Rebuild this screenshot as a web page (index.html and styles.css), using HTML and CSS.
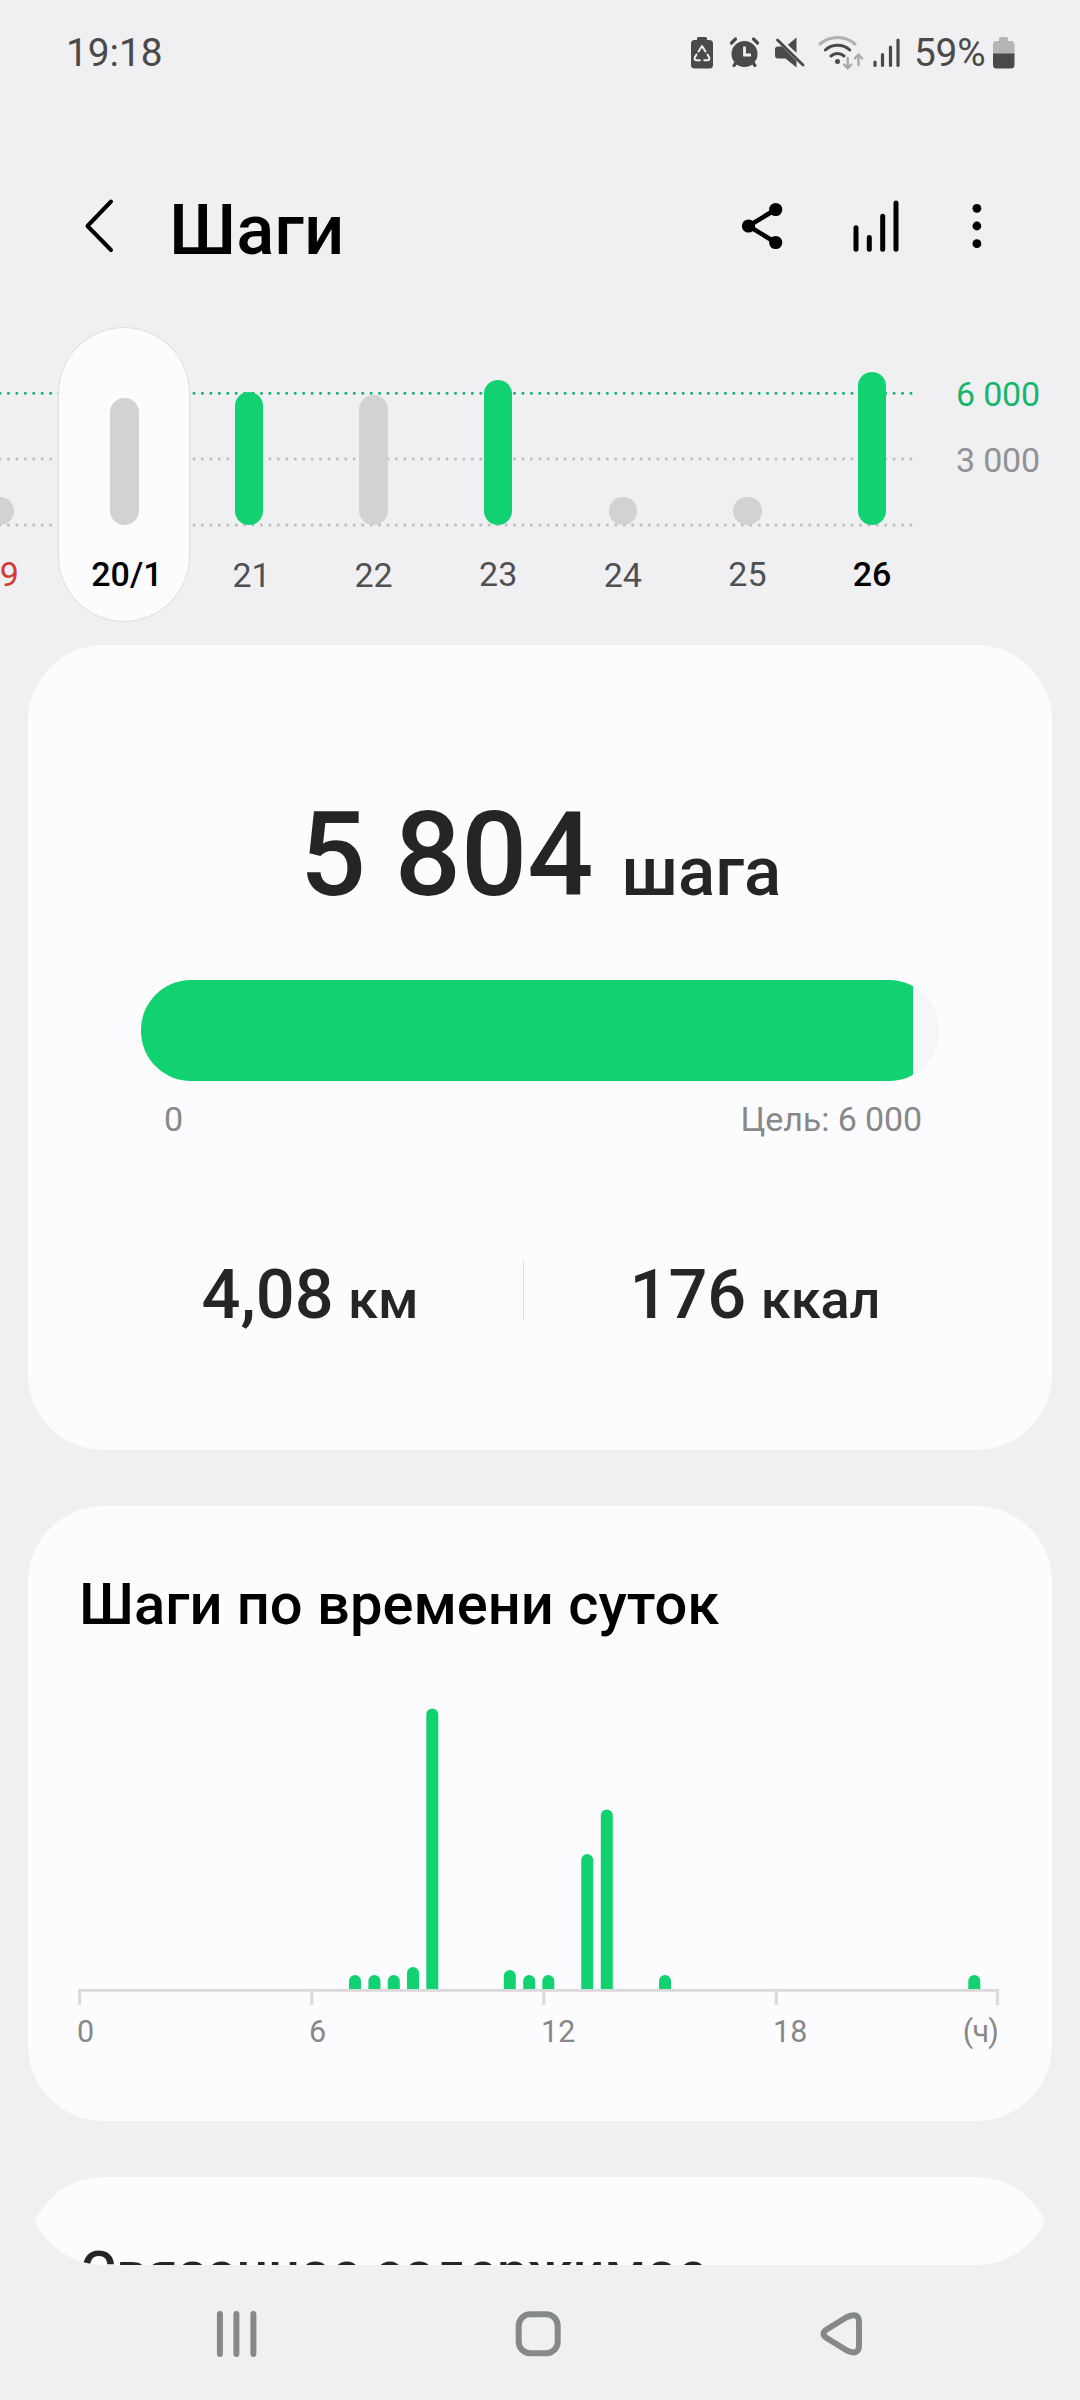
FILE: index.html
```html
<!DOCTYPE html>
<html lang="ru">
<head>
<meta charset="utf-8">
<title>Шаги</title>
<link rel="stylesheet" href="styles.css">
</head>
<body>
<header class="status">
  <span class="time">19:18</span>
  <div class="status-right">
    <svg class="status-icons" width="246" height="50" viewBox="0 0 246 50">
      <g fill="#4a4a4a">
        <path d="M8 4.500a1.500 1.500 0 0 1 1.500-1.500h7a1.500 1.500 0 0 1 1.500 1.500V6h2.500a3.500 3.500 0 0 1 3.500 3.500v21.500a3.500 3.500 0 0 1-3.500 3.500h-15A3.500 3.500 0 0 1 2 31V9.500a3.500 3.500 0 0 1 3.500-3.500h2.500z"/>
        <circle cx="55.500" cy="20" r="13"/>
        <path d="M86 15.500a3 3 0 0 1 3-3h4l14.500 14.500V33.500l-11-9h-7.500a3 3 0 0 1-3-3zM98.500 11l9-7.500V19z"/>
        <circle cx="148.500" cy="27.500" r="2.500"/>
      </g>
      <g fill="none" stroke="#f0f0f3" stroke-width="2" stroke-linecap="round" stroke-linejoin="round">
        <path d="M9.500 17.500l3.500-5.500 3.500 5.500M7.500 20.500l-1.700 3q-.8 2.800 2 2.800h3M18.500 20.500l1.700 3q.8 2.800-2 2.800h-3"/>
      </g>
      <path d="M55.500 12.500v8.500h6.500" fill="none" stroke="#f0f0f3" stroke-width="2.800"/>
      <g fill="none" stroke="#4a4a4a" stroke-width="3.200" stroke-linecap="round">
        <path d="M42.500 9l4-4M64.500 5l4 4M45 31.500l3-4M66 31.500l-3-4"/>
      </g>
      <path d="M91 5l24.500 24.500" stroke="#f0f0f3" stroke-width="3"/>
      <path d="M88.500 6L114 31" stroke="#4a4a4a" stroke-width="2.800" stroke-linecap="round"/>
      <g fill="none" stroke-width="3" stroke-linecap="round">
        <path d="M131 10a27 27 0 0 1 35 0" stroke="#b0b0b2"/>
        <path d="M136.300 16a18.500 18.500 0 0 1 24.500 0M142 22a10 10 0 0 1 13 0" stroke="#4a4a4a"/>
        <path d="M158.700 24v10M155 30.500l3.700 3.700 3.700-3.700M169.500 31V21M165.800 24.500l3.700-3.700 3.700 3.700" stroke="#a9a9ab" stroke-width="2.400"/>
        <path d="M186 28v3.500M193.500 20.500v11M201.500 13v18.500M209 6v25.500" stroke="#4a4a4a" stroke-width="3.200"/>
      </g>
    </svg>
    <span class="percent">59%</span>
    <svg class="battery" width="22" height="32" viewBox="0 0 22 32">
      <path d="M6 2a2 2 0 0 1 2-2h5a2 2 0 0 1 2 2v2h3a3.500 3.500 0 0 1 3.500 3.500V17H0V7.500A3.500 3.500 0 0 1 3.500 4H6z" fill="#b5b5b8"/>
      <path d="M0 16.500h21.500V28a3.500 3.500 0 0 1-3.500 3.500H3.500A3.500 3.500 0 0 1 0 28z" fill="#4a4a4a"/>
    </svg>
  </div>
</header>

<nav class="appbar">
  <svg class="back" width="32" height="60" viewBox="0 0 32 60"><path d="M27 5.500L3.500 30 27 54" fill="none" stroke="#000" stroke-width="4" stroke-linecap="round" stroke-linejoin="round"/></svg>
  <h1>Шаги</h1>
  <svg class="actions" width="260" height="60" viewBox="0 0 260 60">
    <path d="M35.700 13.500L8.500 30l27.200 16.500" fill="none" stroke="#000" stroke-width="4.600"/>
    <circle cx="35.700" cy="13.500" r="6.600"/><circle cx="8.500" cy="30" r="6.600"/><circle cx="35.700" cy="46.500" r="6.600"/>
    <path d="M116 31.700v21.500M129.300 41.500v11.700M142.700 20.300v32.900M156 7v46.200" stroke="#000" stroke-width="5" stroke-linecap="round"/>
    <circle cx="236.900" cy="12.300" r="4.400"/><circle cx="236.900" cy="30" r="4.400"/><circle cx="236.900" cy="47.700" r="4.400"/>
  </svg>
</nav>

<section class="week">
  <svg class="grid-lines" width="920" height="300" viewBox="0 0 920 300">
    <g fill="none" stroke-width="3" stroke-linecap="round" stroke-dasharray="0 8.435">
      <path d="M0 68.300H912" stroke="#12b46c"/>
      <path d="M0 134H912M0 200H912" stroke="#bdbdc0"/>
    </g>
  </svg>
  <div class="days">
    <div class="day sunday"><i class="bar" style="height:28px"></i><span>19</span></div>
    <div class="day selected"><i class="bar" style="height:127px"></i><span>20/1</span></div>
    <div class="day next"><i class="bar reached" style="height:133px"></i><span class="low">21</span></div>
    <div class="day"><i class="bar" style="height:130px"></i><span class="low">22</span></div>
    <div class="day"><i class="bar reached" style="height:145px"></i><span>23</span></div>
    <div class="day"><i class="bar" style="height:28px"></i><span class="low">24</span></div>
    <div class="day"><i class="bar" style="height:28px"></i><span>25</span></div>
    <div class="day today"><i class="bar reached" style="height:153px"></i><span>26</span></div>
  </div>
  <div class="scale"><span class="goal">6 000</span><span>3 000</span></div>
</section>

<main class="content">
  <section class="card summary">
    <p class="total"><b>5 804</b><span>шага</span></p>
    <div class="track"><div class="fill" style="width:96.73%"></div></div>
    <div class="limits"><span>0</span><span>Цель: 6 000</span></div>
    <div class="stats">
      <p class="stat"><b>4,08</b><span>км</span></p>
      <i class="divider"></i>
      <p class="stat energy"><b>176</b><span>ккал</span></p>
    </div>
  </section>

  <section class="card hourly">
    <h2>Шаги по времени суток</h2>
    <svg class="chart" width="930" height="310" viewBox="0 0 930 310">
      <g class="columns">
        <path d="M271 289v-8a6 6 0 0 1 12 0v8z"/>
        <path d="M290.400 289v-8a6 6 0 0 1 12 0v8z"/>
        <path d="M309.800 289v-8a6 6 0 0 1 12 0v8z"/>
        <path d="M329 289v-16a6 6 0 0 1 12 0v16z"/>
        <path d="M348.300 289v-274.500a6 6 0 0 1 12 0v274.500z"/>
        <path d="M425.800 289v-13a6 6 0 0 1 12 0v13z"/>
        <path d="M445.200 289v-8a6 6 0 0 1 12 0v8z"/>
        <path d="M464.300 289v-8a6 6 0 0 1 12 0v8z"/>
        <path d="M503.200 289v-129a6 6 0 0 1 12 0v129z"/>
        <path d="M522.800 289v-173.500a6 6 0 0 1 12 0v173.500z"/>
        <path d="M581 289v-8a6 6 0 0 1 12 0v8z"/>
        <path d="M890.300 289v-8a6 6 0 0 1 12 0v8z"/>
      </g>
      <path d="M0 290.400H921" stroke="#d9d9db" stroke-width="2.700"/>
      <path d="M1.500 290v15M233.800 290v15M465.800 290v15M698.300 290v15M919.500 290v15" stroke="#dcdcde" stroke-width="3.300"/>
    </svg>
    <div class="hours"><span>0</span><span>6</span><span>12</span><span>18</span><span class="unit">(ч)</span></div>
  </section>

  <section class="card related"><h2>Связанное содержимое</h2></section>
</main>

<footer class="navbar">
  <svg width="660" height="60" viewBox="0 0 660 60" fill="none" stroke="#858989" stroke-width="6">
    <path d="M9.900 10v40M26.400 10v40M43.400 10v40" stroke-linecap="round"/>
    <rect x="308.700" y="10.300" width="39" height="39" rx="11.500"/>
    <path d="M617 25.300l19.500-12q12.500-6 12.500 5v23q0 11-12.500 5l-19.500-12q-7-4.500 0-9z" stroke-linejoin="round"/>
  </svg>
</footer>
</body>
</html>
```
FILE: styles.css
```css
* { box-sizing: border-box; }
body {
  margin: 0;
  width: 1080px;
  height: 2400px;
  overflow: hidden;
  display: flex;
  flex-direction: column;
  background: #f0f0f3;
  font-family: Roboto, "Noto Sans", sans-serif;
  color: #252528;
}
h1, h2, p { margin: 0; font-weight: 500; white-space: nowrap; }
b { font-weight: 500; }
svg { display: block; flex: none; }

.status {
  flex: none;
  height: 104px;
  padding: 30px 65px 0 66px;
  display: flex;
  justify-content: space-between;
  font-size: 38.800px;
  line-height: 45px;
  color: #4a4a4a;
}
.status-right { display: flex; align-items: flex-start; }
.status-icons { margin-top: 4px; margin-right: -21px; }
.percent { width: 79px; letter-spacing: -0.2px; }
.battery { margin-top: 7px; }

.appbar {
  flex: none;
  height: 223px;
  padding: 92px 0 0 84px;
  display: flex;
}
h1 { width: 571px; margin-left: 53px; margin-top: -8px; font-size: 70.700px; line-height: 83px; color: #000; }

.week { flex: none; height: 318px; display: grid; grid-template-columns: 934px 1fr; }
.grid-lines, .days { grid-area: 1 / 1; }
.grid-lines { margin-top: -2px; }
.days { display: flex; margin-left: -62.500px; height: 295px; }
.day {
  flex: none;
  width: 124.600px;
  padding-bottom: 28px;
  display: flex;
  flex-direction: column;
  align-items: center;
  justify-content: flex-end;
  font-size: 34px;
  line-height: 40px;
  color: #505053;
}
.day.selected {
  width: 132px;
  margin: 0 -3.700px;
  background: #fcfcff;
  box-shadow: inset 0 0 0 1px #dedee0;
  border-radius: 66px;
}
.selected, .today { font-weight: 500; }
.day.selected, .day.today { color: #000; }
.selected span, .next span { padding-left: 5px; }
.day.sunday { color: #d23c35; }
.bar { width: 28.500px; margin-bottom: 29px; border-radius: 15px; background: #d2d2d2; }
.reached { background: #12d170; }
.low { margin-bottom: -1px; margin-top: 1px; }
.scale { padding: 47px 0 0 22px; display: flex; flex-direction: column; gap: 26px; font-size: 34px; line-height: 40px; letter-spacing: -0.2px; color: #929294; }
.scale .goal { color: #18b66b; }

.content {
  flex: none;
  height: 1620px;
  margin: 0 28px;
  display: flex;
  flex-direction: column;
  gap: 56px;
  overflow: hidden;
  border-radius: 0 0 76px 76px;
}
.card { flex: none; background: #fcfcff; border-radius: 76px; }

.summary { height: 805px; padding-top: 142px; display: flex; flex-direction: column; }
.total { display: flex; align-items: baseline; justify-content: center; gap: 28px; height: 193px; padding-left: 1px; font-size: 69px; }
.total b { font-size: 116.500px; line-height: 137px; }
.track { height: 101px; margin: 0 113px; border-radius: 50px; overflow: hidden; background: #f6f6f8; }
.fill { height: 100%; background: #12d170; }
.limits { display: flex; justify-content: space-between; padding: 18px 130px 0 136px; font-size: 34px; line-height: 40px; letter-spacing: -0.1px; color: #88888a; }
.stats { display: flex; margin-top: 110px; padding-left: 68px; }
.stat { width: 428px; display: flex; align-items: baseline; justify-content: center; gap: 14.500px; padding-top: 1px; font-size: 54px; line-height: 90px; }
.stat b { font-size: 68.500px; }
.energy { width: 462px; }
.divider { width: 1px; height: 61px; margin: 11px 0 0 -1px; background: #dedee0; }

.hourly { height: 615px; padding: 64px 50px 0; }
h2 { font-size: 57.850px; line-height: 68px; }
.hourly h2 { padding-left: 1px; color: #000; }
.chart { margin-top: 62px; }
.columns { fill: #12d170; }
.hours { display: grid; grid-template-columns: 232px 232px 232px 120px 105px; font-size: 30.500px; line-height: 36px; margin: 4px 0 0 -1px; color: #88888a; }
.unit { text-align: right; letter-spacing: -0.8px; }

.related { height: 400px; padding: 62px 52px 0; }
.related h2 { font-size: 55.400px; }

.navbar { flex: none; height: 135px; padding: 39px 0 0 210px; }
```
